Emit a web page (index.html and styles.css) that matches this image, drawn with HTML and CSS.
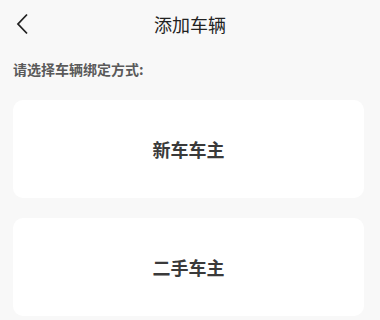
FILE: index.html
```html
<!DOCTYPE html>
<html lang="zh-CN">
<head>
    <meta charset="UTF-8">
    <meta name="viewport" content="width=device-width, initial-scale=1.0">
    <title>添加车辆</title>
    <link rel="stylesheet" href="styles.css">
</head>
<body>

<div class="header">
    <span class="back">
        <svg width="14" height="22" viewBox="0 0 14 22">
            <path d="M12 1.5 L3 11 L12 20.5" fill="none" stroke="#222" stroke-width="1.8"/>
        </svg>
    </span>
    <h1>添加车辆</h1>
</div>

<div class="container">
    <p class="tip">请选择车辆绑定方式:</p>
    <div class="card">新车车主</div>
    <div class="card">二手车主</div>
</div>

</body>
</html>
```

FILE: styles.css
```css
body {
    margin: 0;
    padding: 0;
    background-color: #f8f8f8;
    font-family: "Noto Sans CJK SC", "Noto Sans", sans-serif;
    color: #333;
}
.header {
    position: relative;
    height: 48px;
    display: flex;
    align-items: center;
    justify-content: center;
}
.header h1 {
    margin: 0;
    font-size: 18px;
    font-weight: normal;
    color: #222;
}
.back {
    position: absolute;
    left: 15px;
    top: 13px;
    display: flex;
}
.container {
    padding: 0 16px 0 13px;
}
.tip {
    margin: 11px 0 0;
    font-size: 14px;
    font-weight: bold;
    color: #5a5a5a;
    line-height: 20px;
}
.card {
    margin-top: 21px;
    height: 98px;
    background-color: #ffffff;
    border-radius: 10px;
    display: flex;
    align-items: center;
    justify-content: center;
    font-size: 18px;
    font-weight: bold;
    color: #3a3a3a;
}
.card + .card {
    margin-top: 20px;
}
```
